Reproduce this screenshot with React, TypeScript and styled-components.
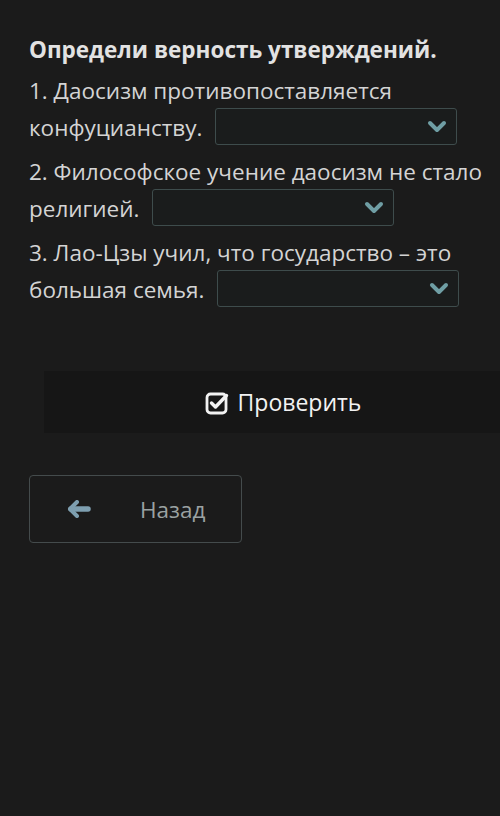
import React from "react";
import styled, { createGlobalStyle } from "styled-components";

const Global = createGlobalStyle`
  html, body { margin: 0; padding: 0; background: #1b1b1b; }
  body { overflow: hidden; font-family: "Open Sans", "Noto Sans", sans-serif; }
`;

const Page = styled.div`
  width: 500px;
  min-height: 816px;
  background: #1b1b1b;
  box-sizing: border-box;
  padding: 31px 0 0 29px;
  overflow: hidden;
`;

const Heading = styled.div`
  color: #e2e2e2;
  font-size: 22.5px;
  font-weight: 700;
  line-height: 38px;
  margin-bottom: 3px;
`;

const Item = styled.div`
  color: #d4d4d4;
  font-size: 22.5px;
  line-height: 37px;
  margin-bottom: 7px;
  white-space: nowrap;
`;

const SelectBox = styled.span`
  display: inline-flex;
  align-items: center;
  justify-content: flex-end;
  vertical-align: middle;
  width: 242px;
  height: 37px;
  box-sizing: border-box;
  border: 1.5px solid #3e4c4c;
  border-radius: 3px;
  background: #1a1c1c;
  padding-right: 9px;
  margin-left: 13px;
  margin-top: -6px;
`;

const Chevron = () => (
  <svg width="20" height="14" viewBox="0 0 20 14">
    <path d="M3 3 L10 10 L17 3" fill="none" stroke="#6f9ea4" strokeWidth="4" strokeLinecap="round" strokeLinejoin="round" />
  </svg>
);

const CheckRow = styled.div`
  margin-top: 63px;
  margin-left: 15px;
  width: 478px;
  height: 62px;
  background: #161616;
  display: flex;
  align-items: center;
  justify-content: center;
  gap: 8px;
  color: #f2f2f2;
  font-size: 23px;
`;

const BackButton = styled.div`
  margin-top: 42px;
  width: 213px;
  height: 68px;
  box-sizing: border-box;
  border: 1.5px solid #444b4c;
  border-radius: 4px;
  display: flex;
  align-items: center;
  padding-left: 37px;
  color: #9ba2a2;
  font-size: 22.5px;
`;

const BackLabel = styled.span`
  margin-left: 49px;
`;

const CheckIcon = () => (
  <svg width="25" height="25" viewBox="0 0 25 25">
    <rect x="2" y="4" width="19" height="19" rx="3.5" fill="none" stroke="#f2f2f2" strokeWidth="2.8" />
    <path d="M6.5 13 L10.5 17 L21.5 5.5" fill="none" stroke="#f2f2f2" strokeWidth="3.4" strokeLinecap="round" strokeLinejoin="round" />
  </svg>
);

const ArrowIcon = () => (
  <svg width="24" height="18" viewBox="0 0 24 18">
    <path d="M10 2 L3 9 L10 16" fill="none" stroke="#7e9fb0" strokeWidth="4" strokeLinecap="round" strokeLinejoin="round" />
    <path d="M4 9 H21" stroke="#7e9fb0" strokeWidth="5.5" strokeLinecap="round" />
  </svg>
);

const items = [
  { a: "1. Даосизм противопоставляется", b: "конфуцианству." },
  { a: "2. Философское учение даосизм не стало", b: "религией." },
  { a: "3. Лао-Цзы учил, что государство – это", b: "большая семья." },
];

export default function App() {
  return (
    <>
      <Global />
      <Page>
        <Heading>Определи верность утверждений.</Heading>
        {items.map((it, i) => (
          <Item key={i}>
            {it.a}
            <br />
            {it.b}
            <SelectBox>
              <Chevron />
            </SelectBox>
          </Item>
        ))}
        <CheckRow>
          <CheckIcon />
          <span>Проверить</span>
        </CheckRow>
        <BackButton>
          <ArrowIcon />
          <BackLabel>Назад</BackLabel>
        </BackButton>
      </Page>
    </>
  );
}
